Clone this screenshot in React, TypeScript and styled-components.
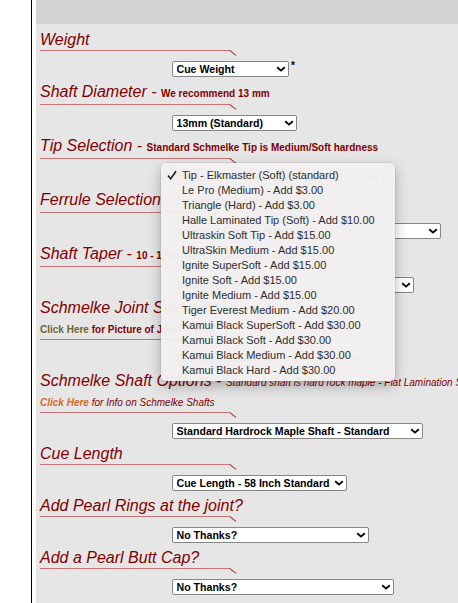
import styled, { createGlobalStyle } from "styled-components"

const GlobalStyle = createGlobalStyle`
  html, body {
    margin: 0;
    padding: 0;
    background: #fff;
  }
  body {
    font-family: "Liberation Sans", Arial, sans-serif;
    overflow: hidden;
  }
`

const Page = styled.div`
  display: flex;
  min-height: 100vh;
  padding-left: 31px;
`

const Frame = styled.div`
  flex: 1;
  min-width: 0;
  display: flex;
  border-left: 1px solid #000;
  padding-left: 4px;
`

const Panel = styled.main`
  flex: 1;
  min-width: 0;
  background: #e6e6e6;
  overflow: hidden;
`

const TopBar = styled.div`
  height: 24px;
  background: #d2d2d2;
`

const Form = styled.form`
  padding: 5.5px 0 0 4px;
`

const Section = styled.section`
  padding-bottom: 5px;
`

const Heading = styled.h3`
  margin: 0;
  font-size: 16px;
  line-height: 20px;
  font-style: italic;
  font-weight: normal;
  color: #800000;
  white-space: nowrap;
`

const Note = styled.span<{ $italic?: boolean }>`
  font-size: 10px;
  font-weight: ${p => (p.$italic ? "normal" : "bold")};
  font-style: ${p => (p.$italic ? "italic" : "normal")};
`

const LinkLine = styled.div<{ $italic?: boolean }>`
  font-size: 10px;
  line-height: 19px;
  color: #800000;
  white-space: nowrap;
  font-weight: ${p => (p.$italic ? "normal" : "bold")};
  font-style: ${p => (p.$italic ? "italic" : "normal")};
`

const ClickHere = styled.a<{ $color: string }>`
  color: ${p => p.$color};
  font-weight: bold;
  text-decoration: none;
`

const Rule = styled.div`
  position: relative;
  width: 190px;
  height: 1px;
  background: #c97474;

  &::after {
    content: "";
    position: absolute;
    left: 100%;
    top: 0;
    width: 8px;
    height: 1px;
    background: #9e2a2a;
    transform-origin: 0 0;
    transform: rotate(38deg);
  }
`

const SelectRow = styled.div`
  display: flex;
  align-items: flex-start;
  margin-top: 10px;
  padding-left: 132px;
  height: 16px;
`

const SelectBox = styled.div<{ $w: number }>`
  position: relative;
  box-sizing: border-box;
  display: flex;
  align-items: center;
  width: ${p => p.$w}px;
  height: 16px;
  border: 1px solid #868686;
  border-radius: 2px;
  background: #fff;
  padding-right: 2px;
`

const NativeSelect = styled.select`
  appearance: none;
  flex: 1;
  min-width: 0;
  height: 14px;
  border: 0;
  margin: 0;
  padding: 0 0 0 3.5px;
  background: transparent;
  font: bold 10.6px "Liberation Sans", Arial, sans-serif;
  line-height: 14px;
  color: #000;
  outline: none;
`

const Req = styled.span`
  margin-left: 2px;
  font-size: 10px;
  font-weight: bold;
  line-height: 10px;
  color: #000;
`

const Menu = styled.ul`
  position: absolute;
  top: -6.5px;
  left: -12px;
  z-index: 5;
  box-sizing: border-box;
  width: 234px;
  margin: 0;
  padding: 4px 0;
  list-style: none;
  background: rgba(241, 239, 239, 0.98);
  border-radius: 5px;
  box-shadow: 0 0 0 0.5px rgba(0, 0, 0, 0.12), 0 5px 14px rgba(0, 0, 0, 0.28);
`

const MenuItem = styled.li`
  display: flex;
  align-items: center;
  height: 15px;
  padding-left: 6px;
  font-size: 11px;
  color: #2e2e2e;
  white-space: nowrap;
`

const CheckSlot = styled.span`
  display: flex;
  width: 15px;
`

const Chevron = () => (
  <svg width="10" height="6" viewBox="0 0 10 6">
    <path d="M1.2 1.2 L5 4.6 L8.8 1.2" fill="none" stroke="#000" strokeWidth="1.9" />
  </svg>
)

const Check = () => (
  <svg width="10" height="10" viewBox="0 0 10 10">
    <path d="M1 5.4 L3.7 8.8 L9 1.2" fill="none" stroke="#222" strokeWidth="1.6" />
  </svg>
)

const tips = [
  "Tip - Elkmaster (Soft) (standard)",
  "Le Pro (Medium) - Add $3.00",
  "Triangle (Hard) - Add $3.00",
  "Halle Laminated Tip (Soft) - Add $10.00",
  "Ultraskin Soft Tip - Add $15.00",
  "UltraSkin Medium - Add $15.00",
  "Ignite SuperSoft - Add $15.00",
  "Ignite Soft - Add $15.00",
  "Ignite Medium - Add $15.00",
  "Tiger Everest Medium - Add $20.00",
  "Kamui Black SuperSoft - Add $30.00",
  "Kamui Black Soft - Add $30.00",
  "Kamui Black Medium - Add $30.00",
  "Kamui Black Hard - Add $30.00",
]

type PickProps = {
  width: number
  value: string
  req?: boolean
  children?: React.ReactNode
}

const Pick = ({ width, value, req, children }: PickProps) => (
  <SelectRow>
    <SelectBox $w={width}>
      <NativeSelect defaultValue={value}>
        <option>{value}</option>
      </NativeSelect>
      <Chevron />
      {children}
    </SelectBox>
    {req && <Req>*</Req>}
  </SelectRow>
)

const App = () => {
  return (
    <>
      <GlobalStyle />
      <Page>
        <Frame>
          <Panel>
            <TopBar />
            <Form>
              <Section>
                <Heading>Weight</Heading>
                <Rule />
                <Pick width={117} value="Cue Weight" req />
              </Section>

              <Section>
                <Heading>
                  Shaft Diameter - <Note>We recommend 13 mm</Note>
                </Heading>
                <Rule />
                <Pick width={125} value="13mm (Standard)" />
              </Section>

              <Section>
                <Heading>
                  Tip Selection - <Note>Standard Schmelke Tip is Medium/Soft hardness</Note>
                </Heading>
                <Rule />
                <Pick width={205} value="Tip - Elkmaster (Soft) (standard)">
                  <Menu>
                    {tips.map((t, i) => (
                      <MenuItem key={t}>
                        <CheckSlot>{i === 0 && <Check />}</CheckSlot>
                        {t}
                      </MenuItem>
                    ))}
                  </Menu>
                </Pick>
              </Section>

              <Section>
                <Heading>
                  Ferrule Selection - <Note>Standard ferrule is Ivorine-4</Note>
                </Heading>
                <Rule />
                <Pick width={269} value="Ivorine-4 Ferrule (Standard)" />
              </Section>

              <Section>
                <Heading>
                  Shaft Taper - <Note>10 - 12 inch Pro Taper is standard</Note>
                </Heading>
                <Rule />
                <Pick width={242} value="Standard Pro Taper" />
              </Section>

              <Section>
                <Heading>
                  Schmelke Joint Selection - <Note>Stainless</Note>
                </Heading>
                <LinkLine>
                  <ClickHere $color="#6f6536" href="#">Click Here</ClickHere> for Picture of Joint Types
                </LinkLine>
                <Rule />
                <Pick width={190} value="Stainless Steel Joint" />
              </Section>

              <Section>
                <Heading>
                  Schmelke Shaft Options -{" "}
                  <Note $italic>Standard shaft is hard rock maple - Flat Lamination Shaft</Note>
                </Heading>
                <LinkLine $italic>
                  <ClickHere $color="#d4692a" href="#">Click Here</ClickHere> for Info on Schmelke Shafts
                </LinkLine>
                <Rule />
                <Pick width={251} value="Standard Hardrock Maple Shaft - Standard" />
              </Section>

              <Section>
                <Heading>Cue Length</Heading>
                <Rule />
                <Pick width={175} value="Cue Length - 58 Inch Standard" />
              </Section>

              <Section>
                <Heading>Add Pearl Rings at the joint?</Heading>
                <Rule />
                <Pick width={197} value="No Thanks?" />
              </Section>

              <Section>
                <Heading>Add a Pearl Butt Cap?</Heading>
                <Rule />
                <Pick width={222} value="No Thanks?" />
              </Section>
            </Form>
          </Panel>
        </Frame>
      </Page>
    </>
  )
}

export default App
